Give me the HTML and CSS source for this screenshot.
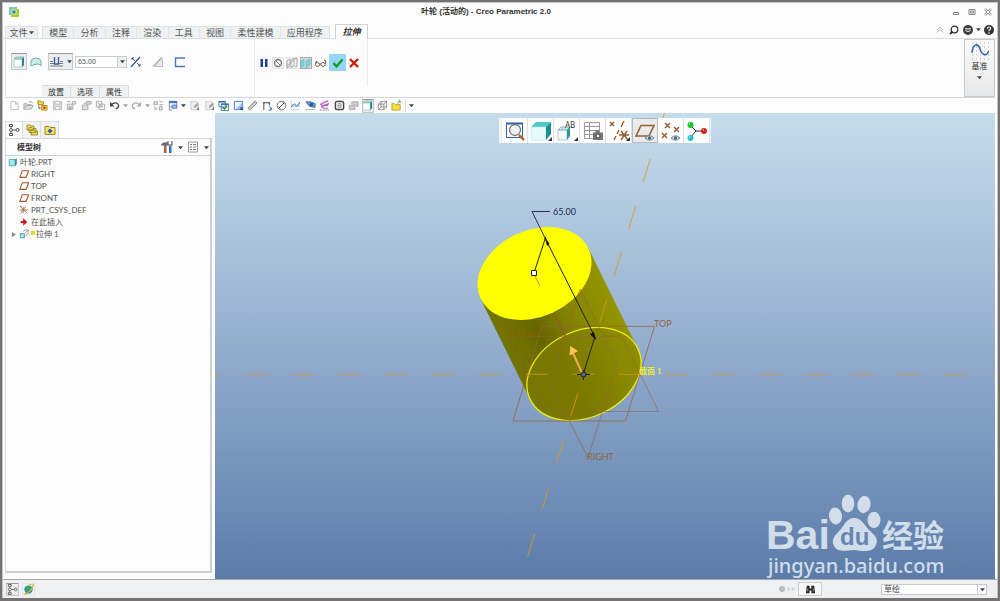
FILE: index.html
```html
<!DOCTYPE html>
<html lang="zh-CN">
<head>
<meta charset="utf-8">
<title>叶轮 (活动的) - Creo Parametric 2.0</title>
<link rel="stylesheet" href="styles.css">
</head>
<body>
<svg class="defs" aria-hidden="true">
  <symbol id="caret" viewBox="0 0 6 6"><path d="M0 1.500h6L3 5z" fill="#444"/></symbol>
  <symbol id="plane" viewBox="0 0 12 12"><path d="M4 2h7.500L8.500 10H1z" fill="none" stroke="#a0592c" stroke-width="1.300"/></symbol>
  <symbol id="sheet" viewBox="0 0 12 12"><path d="M2 1.500h5l3 3v6H2zM7 1.500v3h3" fill="#fff" stroke="#bbb"/></symbol>
  <symbol id="edit" viewBox="0 0 12 12"><path d="M2 1.500h6l2 2v7H2z" fill="#eee" stroke="#ccc"/><path d="M5 9l1-3 3-3 2 2-3 3z" fill="#aaa"/><path d="M8 11l3-4v4z" fill="#777"/></symbol>
  <symbol id="save" viewBox="0 0 12 12"><path d="M1.500 1.500h9v9h-9z" fill="#ddd" stroke="#bbb"/><path d="M3.500 1.500h5v3h-5zM3.500 7h5v3.500h-5z" fill="#f8f8f8" stroke="#bbb"/></symbol>
  <symbol id="savecopy" viewBox="0 0 12 12"><path d="M1.500 4.500h6v6h-6zM1 1.500h4M7 1.500h3.500v3H7z" fill="#e5e5e5" stroke="#aaa"/><path d="M3 7h3v3H3z" fill="#aaa"/></symbol>
  <symbol id="solid" viewBox="0 0 12 12"><path d="M1 3h8v8H1z" fill="#fff" stroke="#9dbcbd" stroke-width=".7"/><path d="M1 3l2-2h8L9 3z" fill="#a9e2e3" stroke="#75a5a7" stroke-width=".7"/><path d="M9 3l2-2v8l-2 2z" fill="#21898c"/></symbol>
  <symbol id="tree" viewBox="0 0 12 12"><path d="M3 3v6M3 6h6" stroke="#666"/><g fill="#fff" stroke="#555"><path d="M1.500.5h3v2h-3zM1.500 9.500h3v2h-3z"/><circle cx="3" cy="6" r="1.500"/><circle cx="9.500" cy="6" r="1.500"/></g></symbol>
  <symbol id="eye" viewBox="0 0 10 6"><path d="M0 3q5-5 10 0-5 5-10 0z" fill="#c5d5e0" stroke="#667f91"/><circle cx="5" cy="3" r="1.700" fill="#365e80"/></symbol>
</svg>
<div class="window">
  <header class="titlebar">
    <svg class="logo" viewBox="0 0 12 12"><path d="M1 1h8v8H1z" fill="#76c7dc"/><path d="M3 3h8v8H3z" fill="#a9cf38"/><path d="M4 4h4v4H4z" fill="#287fc4" stroke="#e8e88c"/></svg>
    <h1>叶轮 (活动的) - Creo Parametric 2.0</h1>
    <div class="winbtns">
      <button aria-label="最小化"><svg viewBox="0 0 8 8"><path d="M1.500 4.500h5v2h-5z" fill="none" stroke="#888"/></svg></button>
      <button aria-label="还原"><svg viewBox="0 0 8 8"><path d="M1 1.500h6v5H1zM2.500 3h3v2h-3z" fill="none" stroke="#888"/></svg></button>
      <button aria-label="关闭"><svg viewBox="0 0 8 8"><path d="M1 1l6 6M7 1L1 7" stroke="#888" stroke-width="2.400"/><path d="M1 1l6 6M7 1L1 7" stroke="#fff" stroke-width="1"/></svg></button>
    </div>
  </header>
  <nav class="tabs">
    <button class="file">文件<svg class="c5"><use href="#caret"/></svg></button>
    <div class="tabset">
      <button>模型</button><button>分析</button><button>注释</button><button>渲染</button><button>工具</button><button>视图</button><button>柔性建模</button><button>应用程序</button>
    </div>
    <button class="current">拉伸</button>
    <div class="help">
      <button aria-label="折叠"><svg viewBox="0 0 12 12"><path d="M3 6l3-3 3 3M3 8.500l3-3 3 3" fill="none" stroke="#bbb"/></svg></button>
      <button aria-label="搜索"><svg viewBox="0 0 12 12"><circle cx="6.500" cy="5.500" r="3.300" fill="none" stroke="#333" stroke-width="1.300"/><path d="M4.500 7.500L2 10" stroke="#333" stroke-width="1.800"/></svg></button>
      <button aria-label="学习"><svg viewBox="0 0 12 12"><circle cx="6" cy="6" r="5" fill="#3d3d3d"/><path d="M3 4.800h6M3.500 6.500q2.500 2 5 0" fill="none" stroke="#fff"/></svg></button>
      <svg class="c5"><use href="#caret"/></svg>
      <button aria-label="帮助"><svg viewBox="0 0 12 12"><circle cx="6" cy="6" r="5" fill="#333"/><path d="M4.300 4.700q0-1.700 1.700-1.700t1.700 1.500q0 1-1.700 1.800v1M6 8.300v1.200" fill="none" stroke="#fff" stroke-width="1.200"/></svg></button>
    </div>
  </nav>
  <section class="ribbon">
    <div class="dash">
      <div class="controls">
        <button class="pressed" aria-label="实体"><svg viewBox="0 0 12 12"><use href="#solid"/></svg></button>
        <button aria-label="曲面"><svg viewBox="0 0 12 12"><path d="M1 10V5q1-3 5-3t5 3v5q-1-2-3-2-4 0-7 2z" fill="#c9eeee" stroke="#7aa9aa"/></svg></button>
        <button class="pressed split" aria-label="深度"><svg class="w13" viewBox="0 0 13 12"><path d="M0 7.500h4M9 7.500h4M0 5.500h3M10 5.500h3M0 10h13" stroke="#777"/><path d="M4.500 1v7h4V1" fill="none" stroke="#3660a9" stroke-width="1.400"/></svg><svg class="c5"><use href="#caret"/></svg></button>
        <div class="combo"><input aria-label="深度值" value="65.00"><button aria-label="选择深度"><svg class="c5"><use href="#caret"/></svg></button></div>
        <button aria-label="反向"><svg viewBox="0 0 12 12"><path d="M1 11L10 1" stroke="#285ab0" stroke-width="1.300"/><path d="M2 2l3 3M2 2v2M2 2h2M7 7l3 3M10 10V8M10 10H8" stroke="#333" stroke-width=".8"/></svg></button>
        <button class="gap" aria-label="移除材料"><svg viewBox="0 0 12 12"><path d="M2 10.500L9 3h1.500v7.500z" fill="#e8e8e8" stroke="#bbb"/><path d="M1 10.500L10 1" stroke="#999"/></svg></button>
        <button class="gap" aria-label="加厚草绘"><svg viewBox="0 0 12 12"><path d="M11 2H1.500v8.500H11" fill="none" stroke="#4d76ba" stroke-width="1.400"/></svg></button>
      </div>
      <div class="subtabs"><button>放置</button><button>选项</button><button>属性</button></div>
    </div>
    <div class="confirm">
      <button aria-label="暂停"><svg viewBox="0 0 12 12"><path d="M2.500 2h2.500v8H2.500zM7 2h2.500v8H7z" fill="#17419c"/></svg></button>
      <button class="soft" aria-label="无预览"><svg viewBox="0 0 12 12"><circle cx="6" cy="6" r="3.500" fill="none" stroke="#777" stroke-width="1.300"/><path d="M3.500 3.500l5 5" stroke="#777"/></svg></button>
      <button class="soft" aria-label="分离预览"><svg viewBox="0 0 12 12"><path d="M1 4l3-2v7l-3 2zM5 3l3-2v8l-3 2zM9 2l2-1v8l-2 1M1 9L10 1" fill="none" stroke="#aaa"/></svg></button>
      <button class="soft on" aria-label="连接预览"><svg viewBox="0 0 12 12"><path d="M1 4l3-2v7l-3 2zM6 4l4-2v6l-4 3z" fill="#73dada" stroke="#6fb5b8" stroke-width=".7"/></svg></button>
      <button aria-label="眼镜"><svg class="w13" viewBox="0 0 13 12"><circle cx="3.500" cy="7.500" r="2" fill="none" stroke="#6e6453"/><circle cx="9" cy="7.500" r="2" fill="none" stroke="#6e6453"/><path d="M1.500 7q0-3 2-3M5.500 7h1.500M11 7l1-3-2-1" fill="none" stroke="#6e6453"/></svg></button>
      <button class="ok" aria-label="确定"><svg viewBox="0 0 12 12"><path d="M1.500 6l3 3.500 6-7" fill="none" stroke="#159a16" stroke-width="2.200"/></svg></button>
      <button aria-label="取消"><svg viewBox="0 0 12 12"><path d="M2 2l8 8M10 2l-8 8" stroke="#c81b0b" stroke-width="2.400"/></svg></button>
    </div>
    <button class="datum"><svg viewBox="0 0 18 18"><path d="M1 1h17M1 5h17M1 9h17M1 13h17M1 17h17" stroke="#aaa" stroke-dasharray="1 3"/><path d="M1 11C2 1 7 1 9 7s6 8 9 2" fill="none" stroke="#3763b1" stroke-width="1.500"/></svg>基准<svg class="c5"><use href="#caret"/></svg></button>
  </section>
  <div class="quickbar">
    <div class="quick">
      <button aria-label="新建"><svg viewBox="0 0 12 12"><use href="#sheet"/></svg></button>
      <button aria-label="打开"><svg viewBox="0 0 12 12"><path d="M1 10V4h3l1 1h4v2" fill="#ddd" stroke="#aaa"/><path d="M1 10l2-4h8l-2 4zM6 2.500q2-2 4 0v1" fill="#ddd" stroke="#aaa"/></svg></button>
      <button aria-label="工作目录"><svg viewBox="0 0 12 12"><path d="M1 1h3l1 1h2v3H1zM5 6h6v5H5z" fill="#f2d83c" stroke="#a68c1a"/><path d="M2 6v3h2" fill="none" stroke="#555"/><circle cx="8" cy="8.500" r="1.300" fill="#d22"/></svg></button>
      <button aria-label="保存"><svg viewBox="0 0 12 12"><use href="#save"/></svg></button>
      <button aria-label="另存为"><svg viewBox="0 0 12 12"><use href="#savecopy"/></svg></button>
      <button aria-label="保存备份"><svg viewBox="0 0 12 12"><path d="M1.500 5.500h6v5h-6zM3 3.500h4M6 1.500h5v3H6z" fill="#ddd" stroke="#aaa"/></svg></button>
      <button aria-label="关闭窗口"><svg viewBox="0 0 12 12"><path d="M1.500 1.500h6v6h-6zM4.500 4.500h6v6h-6zM3 3l5 5" fill="#f4f4f4" stroke="#aaa"/></svg></button>
      <button aria-label="撤消"><svg viewBox="0 0 12 12"><path d="M2 5q7-4 8.500 1 0 3-3 3.500" fill="none" stroke="#444" stroke-width="1.400"/><path d="M1 2v5h5z" fill="#444"/></svg></button>
      <svg class="c5 dim"><use href="#caret"/></svg>
      <button aria-label="重做"><svg viewBox="0 0 12 12"><path d="M10 5Q3 1 1.500 6q0 3 3 3.500" fill="none" stroke="#aaa" stroke-width="1.400"/><path d="M11 2v5H6z" fill="#aaa"/></svg></button>
      <svg class="c5 dim"><use href="#caret"/></svg>
      <button aria-label="重新生成"><svg viewBox="0 0 12 12"><path d="M1 2h4v3H1zM7 2h4M7 5h4M2 7v3h3M7 7h3v4H7z" fill="#ddd" stroke="#aaa"/></svg></button>
      <button aria-label="窗口"><svg viewBox="0 0 12 12"><path d="M1.500 1.500h8v6h-8z" fill="#fff" stroke="#6d8fb9"/><path d="M1 1h9v2.500H1z" fill="#4779b9"/><path d="M4.500 5.500h5V9h-5z" fill="#9fc4ed" stroke="#4779b9"/><path d="M1.500 7v4h3" fill="none" stroke="#888"/></svg></button>
      <svg class="c5"><use href="#caret"/></svg>
      <button aria-label="编辑"><svg viewBox="0 0 12 12"><use href="#edit"/></svg></button>
      <button aria-label="编辑定义"><svg viewBox="0 0 12 12"><use href="#edit"/></svg></button>
      <button aria-label="选择窗口"><svg viewBox="0 0 12 12"><path d="M1 1.500h7v6H1zM3.500 4.500h8v7h-8z" fill="#fff" stroke="#4d76b7"/><path d="M1 2h7M3.500 4.500h8" stroke="#315fa8" stroke-width="1.500"/><path d="M5 8l2 2 3-4" fill="none" stroke="#189a27" stroke-width="1.500"/></svg></button>
      <button aria-label="草绘"><svg viewBox="0 0 12 12"><path d="M1.500 1.500h9v9h-9z" fill="#eef4fc" stroke="#4776bc"/><path d="M3 10l7-7v7z" fill="#9cbcea"/><path d="M8 8h3v3H8z" fill="#2459a5"/></svg></button>
      <button aria-label="测量"><svg viewBox="0 0 12 12"><path d="M1 9l8-8 2 2-8 8z" fill="#ddd" stroke="#777"/><path d="M4 7l1 1M6 5l1 1M8 3l1 1" stroke="#777"/></svg></button>
      <button aria-label="距离"><svg viewBox="0 0 12 12"><path d="M2 11V3h6v3M1 3h2M7 3h2" fill="none" stroke="#444"/><path d="M8 7l3 4M10 8v3H7" stroke="#3b6fc0" fill="none"/></svg></button>
      <button aria-label="直径"><svg viewBox="0 0 12 12"><circle cx="6" cy="6" r="4.700" fill="none" stroke="#666"/><path d="M3 9l6-6" fill="none" stroke="#333"/><path d="M3 9V7l2 2zM9 3v2L7 3z" fill="#333"/></svg></button>
      <button aria-label="曲率"><svg viewBox="0 0 12 12"><path d="M1 1.500h2M1 10.500h10" stroke="#999" stroke-dasharray="1 1"/><path d="M1 3l3 2 2 2 5-5v6H1z" fill="#b8d8f5"/><path d="M1 8l4-4 2 3 4-5" fill="none" stroke="#3c71b5"/></svg></button>
      <button aria-label="截面分析"><svg viewBox="0 0 12 12"><path d="M1 2h5l5 2v4L5 7z" fill="#68a4da" stroke="#3d669b"/><circle cx="7" cy="5" r="2" fill="#285897"/><path d="M1 10.500h10" stroke="#888" stroke-dasharray="2 1"/></svg></button>
      <button aria-label="偏移分析"><svg viewBox="0 0 12 12"><path d="M10 1Q1 4 2 5t8 1M11 4Q2 7 3 8t7 1" fill="none" stroke="#b858bd" stroke-width="1.300"/><path d="M1 11h10" stroke="#777" stroke-dasharray="2 1"/></svg></button>
      <button aria-label="播放"><svg viewBox="0 0 12 12"><rect x="1.500" y="1.500" width="9" height="9" rx="2" fill="#eee" stroke="#444" stroke-width="1.500"/><path d="M4.500 3.500h3v5h-3zM4.500 6h3" fill="none" stroke="#777" stroke-width=".7"/></svg></button>
      <button aria-label="外观"><svg viewBox="0 0 12 12"><path d="M1.500 5.500h6v5h-6zM4 4V2h7v5H9" fill="#ccc" stroke="#aaa"/></svg></button>
      <button class="pressed" aria-label="着色"><svg viewBox="0 0 12 12"><use href="#solid"/></svg></button>
      <button aria-label="线框"><svg viewBox="0 0 12 12"><path d="M1.500 4.500h6v6h-6zM4.500 1.500h6v6h-6zM1.500 4.500l3-3M7.500 4.500l3-3M7.500 10.500l3-3M1.500 10.500l3-3" fill="none" stroke="#777" stroke-width=".8"/></svg></button>
      <button aria-label="文件夹"><svg viewBox="0 0 12 12"><path d="M1 4h3l1 1h5v6H1z" fill="#f4df42" stroke="#b9a12a"/><path d="M7 4l3-3M8 1h2v2" fill="none" stroke="#4d9a40"/></svg></button>
      <span class="rule"></span>
      <button class="more" aria-label="更多"><svg class="c5"><use href="#caret"/></svg></button>
    </div>
  </div>
  <main class="work">
    <aside class="side">
      <div class="sidetabs">
        <button class="active" aria-label="模型树"><svg viewBox="0 0 12 12"><use href="#tree"/></svg></button>
        <button aria-label="文件夹浏览器"><svg viewBox="0 0 12 12"><path d="M1 1h3l1 1h3v4H1zM3 3.500h3l1 1h3v4H3zM5 6h2l1 1h3.500v4H5z" fill="#f0dc52" stroke="#91802a" stroke-width=".8"/></svg></button>
        <button aria-label="收藏夹"><svg viewBox="0 0 12 12"><path d="M1 2.500h4l1 1h5v7H1z" fill="#f6e45c" stroke="#9b8a32"/><path d="M6 4.500L8.500 7 6 9.500 3.500 7z" fill="#3256b9"/></svg></button>
      </div>
      <div class="panel">
        <div class="panelhead"><h2>模型树</h2>
          <button aria-label="设置"><svg viewBox="0 0 12 12"><path d="M0 3.500q2-3 7-2v3H0z" fill="#668"/><path d="M3 4h2.500v8H3z" fill="#ac613c"/><path d="M8 5h2.500v7H8z" fill="#2c73c1"/><path d="M7 0v4h4V0" fill="none" stroke="#777" stroke-width="1.400"/></svg><svg class="c5"><use href="#caret"/></svg></button>
          <button aria-label="显示"><svg viewBox="0 0 12 12"><path d="M1.500 1h9v10h-9z" fill="#fff" stroke="#999"/><path d="M3 3.500h2M3 6h2M3 8.500h2M6 3.500h3M6 6h3M6 8.500h3" stroke="#777"/></svg><svg class="c5"><use href="#caret"/></svg></button>
        </div>
        <ul class="nodes">
          <li class="root"><svg viewBox="0 0 12 12"><path d="M1.500 3h7v7.500h-7z" fill="#9cebed" stroke="#519da4"/><path d="M8.500 3l2-1.500v7.500l-2 1.500z" fill="#248d96"/></svg>叶轮.PRT</li>
          <li><svg><use href="#plane"/></svg>RIGHT</li>
          <li><svg><use href="#plane"/></svg>TOP</li>
          <li><svg><use href="#plane"/></svg>FRONT</li>
          <li><svg viewBox="0 0 12 12"><path d="M1 6h10M2 2l8 8M8 2l-6 8M5 2v8" stroke="#9f6541"/><path d="M1 1.500h2" stroke="#444"/></svg>PRT_CSYS_DEF</li>
          <li><svg viewBox="0 0 12 12"><path d="M2 4.800h3V1.500L10 6 5 10.500V7.200H2z" fill="#cf1717"/></svg>在此插入</li>
          <li class="branch"><button aria-label="展开"><svg class="c5" viewBox="0 0 6 6"><path d="M1 0l5 3-5 3z" fill="#888"/></svg></button><svg viewBox="0 0 12 12"><path d="M1.500 5.500h5v5h-5z" fill="#a5e8ec" stroke="#4b8c92"/><path d="M5 3l3-2h3v4L8 8M7 5l3-3" fill="none" stroke="#888"/></svg><i class="mark"></i>拉伸 1</li>
        </ul>
      </div>
    </aside>
    <section class="canvas">
      <svg class="scene" viewBox="215 113 780 466" preserveAspectRatio="xMidYMid slice" role="img" aria-label="拉伸圆柱">
        <defs>
          <linearGradient id="side" gradientUnits="userSpaceOnUse" x1="504" y1="348" x2="611" y2="296"><stop offset="0" stop-color="#747400"/><stop offset=".18" stop-color="#6f6f00"/><stop offset=".32" stop-color="#666600"/><stop offset=".6" stop-color="#838300"/><stop offset="1" stop-color="#949400"/></linearGradient>
          <linearGradient id="base" x1="0" x2="1" y1="0" y2="0"><stop offset="0" stop-color="#777700"/><stop offset=".4" stop-color="#7b7800"/><stop offset="1" stop-color="#8f8f00"/></linearGradient>
        </defs>
        <path d="M480.800 299.200L530.300 399.700 637.700 348.300 588.200 247.800z" fill="url(#side)"/>
        <ellipse cx="584" cy="374" rx="59.500" ry="43.200" transform="rotate(-24.700 584 374)" fill="url(#base)" stroke="#ecec10" stroke-width="1.300"/>
        <ellipse cx="534.500" cy="273.500" rx="59.500" ry="43.200" transform="rotate(-24.700 534.500 273.500)" fill="#ffff00"/>
        <g fill="none" stroke="#94633d" opacity=".75">
          <path d="M541.700 326.300H654.500L625.500 421H513z"/>
          <path d="M509 336.300H621.500L658.500 411.500H547z" opacity=".75"/>
          <path d="M580 289L617 364 588 458 550 383z" opacity=".8"/>
        </g>
        <g stroke="#df981f" stroke-width="1.100" opacity=".75"><path d="M199.400 374.300H995" stroke-dasharray="22 24.600"/><path d="M664.700 112.100L520.600 579" stroke-dasharray="24 25 24 25 24 25 24 25 24 74 24 25 24 25 24 25 24 25"/></g>
        <path d="M535 276l5 10" stroke="#d98c22"/><path d="M554 313l11 23" stroke="#985234"/>
        <path d="M550 211.500H532L547 242" fill="none" stroke="#27345c"/>
        <path d="M545 238L596 339M545.700 237L534 273M594.500 338L583 375" stroke="#22220c" fill="none"/>
        <path d="M545 237l4.500 7-2.500 2zM595.500 340l-5.500-6 4-2z" fill="#111"/>
        <path d="M531.500 270.500h5v5h-5z" fill="#fff" stroke="#222"/>
        <path d="M582 373L573 353" stroke="#f0aa58" stroke-width="2"/><path d="M570.300 346L578 351 569.500 355.500z" fill="#ffc45e"/>
        <path d="M577 374.500h13M583.500 370v10" stroke="#222"/><circle cx="583.500" cy="374.500" r="2.500" fill="#4e6890" stroke="#222"/>
        <g class="labels"><text x="553" y="215" fill="#1c2a58">65.00</text><text x="654" y="327" fill="#94633d">TOP</text><text x="509" y="337" fill="#826000">FRONT</text><text x="587" y="460" fill="#94633d">RIGHT</text><text class="section" x="639" y="374">截面 1</text></g>
        <g class="faint"><text x="943" y="549">1.1</text><text x="938" y="556">-0.01</text><text x="947" y="565">0.001</text><text x="947" y="574">0.5</text></g>
        <g fill="#dce5ef" opacity=".92">
          <text class="brand" x="766" y="549">Bai</text>
          <ellipse cx="835.500" cy="516" rx="6.500" ry="8.500" transform="rotate(-8 835.500 516)"/><ellipse cx="848" cy="503.500" rx="6.300" ry="9"/><ellipse cx="864" cy="504.500" rx="6.500" ry="8.700" transform="rotate(10 864 504.500)"/><ellipse cx="874" cy="520" rx="6.500" ry="8.300"/>
          <path d="M854 518c8 0 10 7 15 12s10 8 7 15c-3 8-13 6-22 5-9 1-17 2-20-4-4-8 3-12 7-17s6-11 13-11z"/>
          <text class="brand cjk" x="882" y="547">经验</text>
          <text class="site" x="768" y="573">jingyan.baidu.com</text>
        </g>
        <text class="du" x="840" y="545">du</text>
      </svg>
      <div class="viewbar">
        <button aria-label="重新调整"><svg viewBox="0 0 20 20"><path d="M1.500 2.500h16v14h-16z" fill="#fff" stroke="#3360ac"/><path d="M1 2.500h17" stroke="#3360ac" stroke-width="2"/><circle cx="10" cy="9" r="5.500" fill="#eef1f4" stroke="#777" stroke-width="1.300"/><path d="M14 14l5 5" stroke="#a96e32" stroke-width="2.500"/></svg></button>
        <button class="menu" aria-label="显示样式"><svg viewBox="0 0 20 20"><path d="M0 6l5-5h15l-5 5z" fill="#50c7c8"/><path d="M0 6h15v13H0z" fill="#e4fbfb" stroke="#c0dfe0" stroke-width=".7"/><path d="M15 6l5-5v12l-5 6z" fill="#168f91"/></svg></button>
        <button class="menu" aria-label="已保存方向"><svg viewBox="0 0 20 20"><path d="M1 9h9v10H1z" fill="#f4fcfc" stroke="#aab" stroke-width=".7"/><path d="M1 9l3-3h9l-3 3z" fill="#b9e5e6" stroke="#79a3a5" stroke-width=".7"/><path d="M10 9l3-3v9l-3 4z" fill="#299a9b"/><text class="ab" x="8" y="7">AB</text></svg></button>
        <button aria-label="视图管理器"><svg viewBox="0 0 20 20"><path d="M1.500 1.500h15v16h-15zM1 5.500h15M1 9.500h15M1 13.500h15M6.500 1v16" fill="#fff" stroke="#999"/><path d="M10 11.500h2l1-2h3l1 2h3V19H10z" fill="#777"/><circle cx="15" cy="15" r="2" fill="#eee" stroke="#444"/></svg></button>
        <button class="menu" aria-label="基准显示"><svg viewBox="0 0 20 20"><path d="M1 1l4 4M5 1L1 5M15 0l-3 6M10 9l-2 4M7 15l-2 4M10 14h10M12 10l7 9M18 10l-6 9" stroke="#92602e" stroke-width="1.400"/></svg></button>
        <button class="on" aria-label="平面显示"><svg viewBox="0 0 20 20"><path d="M6 4.500h13L14 15H1z" fill="none" stroke="#9b602f" stroke-width="1.600"/><use href="#eye" x="10" y="14" width="9" height="6"/></svg></button>
        <button aria-label="点显示"><svg viewBox="0 0 20 20"><path d="M4 2l5 5M9 2L4 7M13 6l5 5M18 6l-5 5M1 12l5 5M6 12l-5 5" stroke="#92602e" stroke-width="1.400"/><use href="#eye" x="10" y="14" width="9" height="6"/></svg></button>
        <button aria-label="旋转中心"><svg viewBox="0 0 20 20"><path d="M3 4l6 6h8M9 10l-6 7" fill="none" stroke="#333"/><circle cx="3.500" cy="4" r="3" fill="#1ac52c"/><circle cx="17" cy="10" r="3" fill="#df2118"/><circle cx="3.500" cy="17" r="3" fill="#28bfd0"/><path d="M2 3h1M16 9h1M2 16h1" stroke="#fff"/></svg></button>
      </div>
    </section>
  </main>
  <footer class="status">
    <button class="pressed" aria-label="导航器"><svg viewBox="0 0 12 12"><use href="#tree"/></svg></button>
    <button class="soft" aria-label="浏览器"><svg viewBox="0 0 12 12"><circle cx="6" cy="6" r="4.500" fill="#238dc4"/><path d="M3 4l3-2 3 1-3 4-2 2z" fill="#3fae45"/><path d="M1 10q1 2 5-1t5-7-4-1" fill="none" stroke="#ddb12e" stroke-width="1.400"/></svg></button>
    <span class="spacer"></span>
    <svg class="dots" viewBox="0 0 16 8"><circle cx="3" cy="4" r="3" fill="#bbb"/><circle cx="9.500" cy="4" r="1.700" fill="#d5d7d9"/><circle cx="14" cy="4" r="1.700" fill="#d5d7d9"/></svg>
    <button class="find" aria-label="查找"><svg viewBox="0 0 12 12"><path d="M2 2h3v3h2V2h3l1 8H7V7H5v3H1z" fill="#222"/><path d="M3 5v3M9 5v3" stroke="#aaa"/></svg></button>
    <span class="pick"><select aria-label="选择过滤器"><option>草绘</option></select><svg class="c5"><use href="#caret"/></svg></span>
  </footer>
</div>
</body>
</html>
```
FILE: styles.css
```css
* { box-sizing: border-box; }
body { margin: 0; font: 8px/12px "Noto Sans", "Noto Sans CJK SC", sans-serif; color: #555; }
button, input, select { font: inherit; color: inherit; margin: 0; padding: 0; border: 0; background: none; border-radius: 0; }
button { display: flex; align-items: center; justify-content: center; }
h1, h2, ul { margin: 0; padding: 0; }
svg { display: block; flex: none; width: 12px; height: 12px; }
svg.c5 { width: 5px; height: 5px; }
svg.w13 { width: 13px; }
.defs { position: absolute; width: 0; height: 0; }
.dim { opacity: .5; }

.window { height: 100vh; display: flex; flex-direction: column; background: #fcfcfc; border: 2px solid #747272; border-bottom-width: 3px; box-shadow: inset 0 0 0 1px #c4c4c4; }
.titlebar { display: grid; grid-template-columns: 1fr auto 1fr; align-items: center; height: 19px; padding: 0 6px; }
.titlebar .logo { width: 12px; }
.titlebar h1 { font: bold 8px/12px "Liberation Sans", "Noto Sans CJK SC", sans-serif; color: #333; margin-right: 28px; }
.winbtns { display: flex; justify-content: flex-end; gap: 8px; }
.winbtns svg { width: 8px; height: 8px; }

.tabs { display: flex; align-items: flex-end; height: 18px; padding: 0 3px; font-size: 9px; border-bottom: 1px solid #dcdfe0; }
.tabs .file, .tabset { background: #eef0f2; border: 1px solid #dfe2e4; border-bottom: 0; height: 12px; }
.file { width: 33px; gap: 1px; }
.tabset { display: flex; width: 288px; margin-left: 4px; }
.tabset button { flex: 1 0 auto; padding: 0 6px; border-right: 1px solid #e1e4e6; }
.tabset button:last-child { border-right: 0; }
.current { width: 33px; height: 15px; margin: 0 0 -1px 5px; background: #fcfcfc; border: 1px solid #cfd2d4; border-bottom: 0; font-weight: bold; font-style: italic; color: #333; }
.help { display: flex; align-items: center; gap: 2px; margin-left: auto; align-self: center; }

.ribbon { display: flex; margin: 0 3px; height: 59px; border-bottom: 1px solid #d5d8da; border-left: 1px solid #dfe2e4; }
.dash { display: flex; flex-direction: column; justify-content: space-between; width: 249px; border-right: 1px solid #e6e8ea; }
.controls { display: flex; align-items: center; padding: 14px 0 0 5px; gap: 3px; }
.controls .pressed { width: 16px; height: 17px; }
.controls .split { width: 25px; margin-left: 3px; gap: 4px; }
.controls .combo { margin: 0 0 0 -1px; }
.controls .gap { margin-left: 7px; }
.pressed { background: #eceeef; border: 1px solid #c6c9cb; border-top-color: #999; }
.combo { display: flex; width: 52px; height: 12px; border: 1px solid #c9cccd; background: #fff; }
.combo input { flex: 1; min-width: 0; padding-left: 2px; font-size: 7px; line-height: 10px; }
.combo button { width: 9px; background: #eef0f2; border-left: 1px solid #ccc; }
.subtabs { display: flex; margin-left: 36px; }
.subtabs button { width: 29px; height: 12px; background: #eef0f2; border: 1px solid #dadddf; border-bottom: 0; border-left-width: 0; color: #333; }
.confirm { display: flex; align-items: center; gap: 2px; width: 113px; height: 47px; padding-left: 3px; border-right: 1px solid #e9ebed; }
.soft { background: #f2f3f4; border: 1px solid #e2e4e5; }
.confirm .soft { width: 12px; height: 12px; }
.soft.on { background: #d8dcde; border-color: #aaa; }
.ok { width: 17px; height: 17px; background: #94d5fa; border-radius: 1px; }
.datum { flex-direction: column; justify-content: flex-start; width: 31px; margin-left: auto; padding-top: 2px; border: 1px solid #c6c9cb; background: linear-gradient(#fafafa, #e7e8e9); color: #333; }
.datum svg:first-child { width: 18px; height: 18px; }
.datum svg.c5 { margin-top: 3px; }

.quickbar { flex: none; height: 15px; padding-left: 6px; }
.quick { display: flex; align-items: center; justify-content: space-between; width: 406px; height: 15px; }
.quick svg:not(.c5) { width: 11px; height: 11px; }
.quick button { width: 12px; height: 14px; }
.quick .more { width: 5px; }
.rule { width: 1px; height: 12px; background: #ddd; }

.work { flex: 1; min-height: 0; display: flex; padding: 0 3px; }
.side { display: flex; flex-direction: column; width: 210px; padding: 8px 3px 6px 0; }
.sidetabs { display: flex; height: 17px; }
.sidetabs button { width: 18px; background: #f0f2f3; border: 1px solid #dcdfe1; border-left: 0; border-bottom: 0; }
.sidetabs .active { background: #fcfcfc; border-left: 1px solid #dcdfe1; }
.panel { flex: 1; border: 1px solid #d4d7d9; border-right: 2px solid #cdd0d2; border-bottom: 2px solid #cdd0d2; }
.panelhead { display: flex; align-items: center; height: 17px; padding: 0 1px 0 11px; gap: 4px; border-bottom: 1px solid #cfd2d5; }
.panelhead h2 { flex: 1; font-size: 8px; line-height: 12px; color: #333; }
.panelhead button { gap: 5px; }
.nodes { list-style: none; font-family: Lato, "Noto Sans CJK SC", sans-serif; }
.nodes li { display: flex; align-items: center; height: 12px; gap: 1px; padding-left: 12px; }
.nodes .root { padding-left: 1px; }
.nodes svg:not(.c5) { width: 12px; height: 10px; }
.nodes .branch { padding-left: 5px; }
.branch button { margin-right: 1px; }
.mark { width: 4px; height: 4px; margin-bottom: 3px; background: #e4dc20; }

.canvas { flex: 1; min-width: 0; display: grid; background: linear-gradient(#c6dcec, #a8c1da 30%, #8aa5c8 58%, #5b7caa); overflow: hidden; }
.scene, .viewbar { grid-area: 1 / 1; }
.scene { width: 100%; height: 100%; min-height: 0; }
.labels { font: 9px Lato, "Noto Sans CJK SC", sans-serif; }
.section { font-size: 8px; font-weight: 500; fill: #f5f51c; }
.faint { font-size: 6px; fill: #777f96; opacity: .6; }
.brand { font: bold 41px "Liberation Sans", sans-serif; }
.brand.cjk { font: bold 31px "Noto Sans CJK SC", sans-serif; }
.site { font: 500 20px "Noto Sans", sans-serif; }
.du { font: bold 24px "Liberation Sans", sans-serif; fill: #6686b2; }
.ab { font-size: 8px; fill: #444; }
.viewbar { z-index: 1; display: flex; justify-self: center; align-self: start; margin-top: 5px; padding: 0 1px 0 3px; background: #eff3f6; }
.viewbar button { position: relative; width: 26px; height: 25px; background: #fdfdfd; border-right: 1px solid #dde2e6; }
.viewbar svg { width: 20px; height: 20px; }
.viewbar .on { background: #e8eaed; border: 1px solid #b5babf; }
.menu::after { content: ""; position: absolute; right: 1px; bottom: 2px; border: 2px solid; border-color: transparent #333 #333 transparent; }

.status { flex: none; display: flex; align-items: center; height: 19px; margin: 0 1px; padding: 0 10px 0 3px; gap: 3px; background: #eef0f2; border-top: 1px solid #a6a7a9; }
.status .pressed, .status .soft { width: 13px; height: 13px; }
.status svg { width: 11px; height: 11px; }
.spacer { flex: 1; }
.status .dots { width: 16px; height: 8px; }
.find { width: 24px; height: 14px; background: #f7f7f7; border: 1px solid #ccc; margin-right: 56px; }
.pick { display: flex; align-items: center; width: 106px; height: 11px; border: 1px solid #c6c9cb; background: #fff; }
.pick select { flex: 1; height: 10px; padding-left: 2px; line-height: 10px; appearance: none; color: #444; border-right: 1px solid #ccc; }
.status .pick .c5 { width: 5px; height: 5px; margin: 0 1px 0 2px; }
```
